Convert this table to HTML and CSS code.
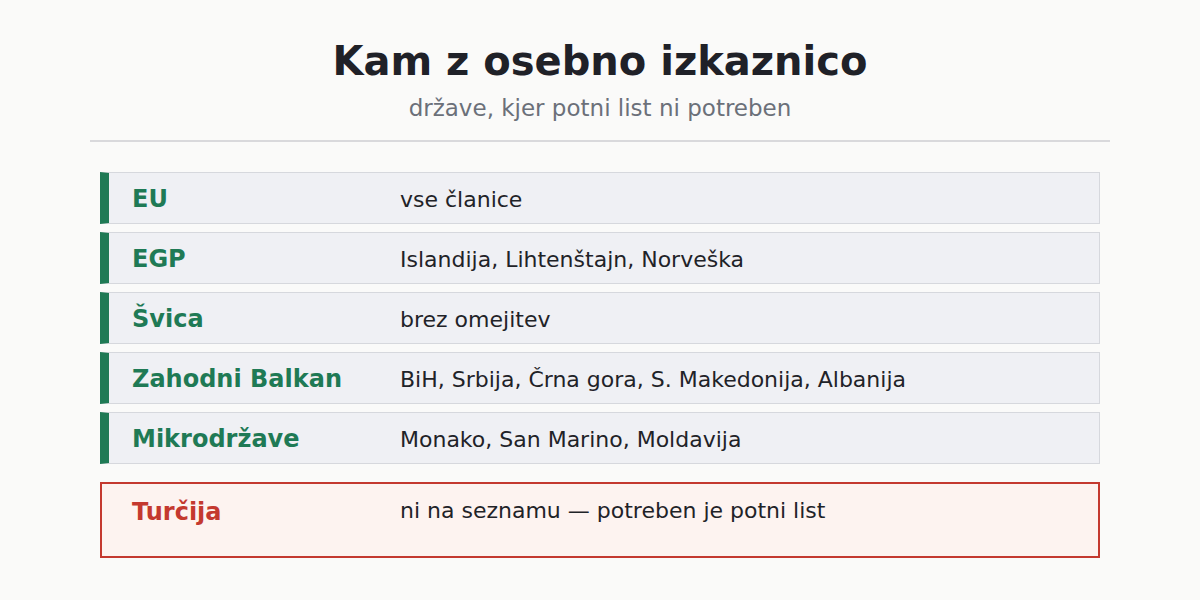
FILE: index.html
```html
<!DOCTYPE html>
<html lang="sl">
<head>
  <meta charset="UTF-8">
  <title>Kam z osebno izkaznico</title>
  <link rel="stylesheet" href="styles.css">
</head>
<body>

<div class="page">
  <header class="head">
    <h1>Kam z osebno izkaznico</h1>
    <p class="sub">države, kjer potni list ni potreben</p>
  </header>

  <div class="list">
    <div class="row">
      <div class="label">EU</div>
      <div class="value">vse članice</div>
    </div>
    <div class="row">
      <div class="label">EGP</div>
      <div class="value">Islandija, Lihtenštajn, Norveška</div>
    </div>
    <div class="row">
      <div class="label">Švica</div>
      <div class="value">brez omejitev</div>
    </div>
    <div class="row">
      <div class="label">Zahodni Balkan</div>
      <div class="value">BiH, Srbija, Črna gora, S. Makedonija, Albanija</div>
    </div>
    <div class="row">
      <div class="label">Mikrodržave</div>
      <div class="value">Monako, San Marino, Moldavija</div>
    </div>

    <div class="row warn">
      <div class="label">Turčija</div>
      <div class="value">ni na seznamu — potreben je potni list</div>
    </div>
  </div>
</div>

</body>
</html>
```

FILE: styles.css
```css
body {
  margin: 0;
  font-family: 'DejaVu Sans', sans-serif;
  background-color: #fafaf9;
  color: #1f2328;
}

.page {
  width: 1020px;
  margin: 0 auto;
  padding-top: 38px;
}

.head {
  text-align: center;
  border-bottom: 2px solid #d9d9dc;
  padding-bottom: 19px;
}

h1 {
  margin: 0;
  font-size: 40px;
  font-weight: bold;
  color: #1f2128;
}

.sub {
  margin: 11px 0 0;
  font-size: 23px;
  color: #6b7079;
}

.list {
  margin: 30px 10px 0;
  display: flex;
  flex-direction: column;
  gap: 8px;
}

.row {
  display: flex;
  align-items: center;
  height: 50px;
  background: #eff0f4;
  border: 1px solid #d6d8dd;
  border-left: 9px solid #1f7a55;
  padding-left: 23px;
}

.label {
  width: 268px;
  padding-top: 2px;
  font-size: 24px;
  font-weight: bold;
  color: #1f7a55;
}

.value {
  padding-top: 2px;
  font-size: 22px;
  color: #1f2328;
}

.warn {
  margin-top: 10px;
  align-items: flex-start;
  padding-top: 12px;
  box-sizing: border-box;
  height: 76px;
  background: #fdf3f0;
  border: 2px solid #c4392f;
  padding-left: 30px;
}

.warn .label {
  color: #c4392f;
}
```
